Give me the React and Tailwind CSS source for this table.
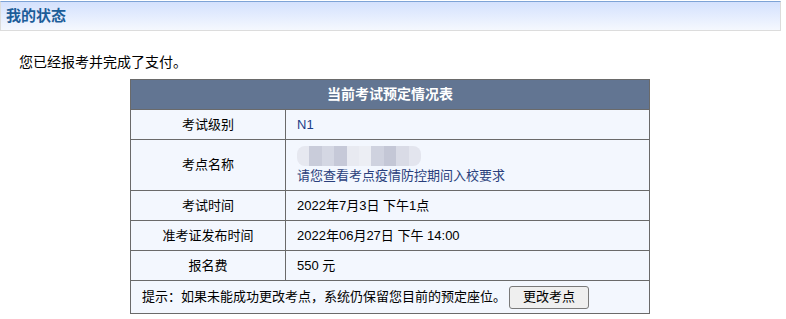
export default function App() {
    const font = { fontFamily: '"Liberation Sans", "Noto Sans CJK SC", sans-serif' };

    // 打码马赛克的色块
    const blocks = ['#e6e8f0', '#c9ccda', '#d4d7e3', '#c6c9d8', '#e8eaf1', '#eceef4', '#cfd2df', '#c4c7d6', '#d9dbe6', '#e3e5ee'];

    const rows = [
        { label: '考试级别', value: <span className="text-[#1b3c86]">N1</span> },
        {
            label: '考点名称',
            value: (
                <div className="flex flex-col">
                    <div className="flex h-[20px] w-[124px] overflow-hidden rounded-[8px] blur-[0.6px]">
                        {blocks.map((c, i) => (
                            <div key={i} className="h-full flex-1" style={{ backgroundColor: c }}></div>
                        ))}
                    </div>
                    <span className="mt-px leading-[18px] text-[#2a3f7c]">请您查看考点疫情防控期间入校要求</span>
                </div>
            ),
            tall: true,
        },
        { label: '考试时间', value: '2022年7月3日 下午1点' },
        { label: '准考证发布时间', value: '2022年06月27日 下午 14:00' },
        { label: '报名费', value: '550 元' },
    ];

    return (
        <div className="min-h-screen bg-white text-[14px] text-black" style={font}>
            {/* 标题栏 */}
            <div className="mt-px flex h-[30px] w-[781px] items-center border border-t-[#7ea3d6] border-x-[#dcdcdc] border-b-[#dcdcdc] bg-gradient-to-b from-[#d4e1fd] to-[#f5f8fe] pl-[5px]">
                <span className="text-[15px] font-bold text-[#1c5d99]">我的状态</span>
            </div>

            <p className="mt-[21px] pl-[19px] leading-[20px]">您已经报考并完成了支付。</p>

            <table className="mt-[7px] ml-[130px] w-[520px] border-collapse border border-[#6a6a6a] bg-[#f3f7fe] text-[13px]">
                <thead>
                    <tr>
                        <th colSpan={2} className="h-[30px] border border-[#6a6a6a] bg-[#627592] p-0 text-center text-[14px] font-bold text-white">
                            当前考试预定情况表
                        </th>
                    </tr>
                </thead>
                <tbody>
                    {rows.map((r) => (
                        <tr key={r.label}>
                            <td className={`${r.tall ? 'h-[51px]' : 'h-[30px]'} w-[155px] border border-[#6a6a6a] p-0 text-center`}>{r.label}</td>
                            <td className="border border-[#6a6a6a] p-0 pl-[11px]">{r.value}</td>
                        </tr>
                    ))}
                    <tr>
                        <td colSpan={2} className="h-[33px] border border-[#6a6a6a] p-0 pl-[11px]">
                            <div className="flex items-center gap-[3px]">
                                <span>提示：如果未能成功更改考点，系统仍保留您目前的预定座位。</span>
                                <button className="h-[23px] w-[80px] rounded-[3px] border border-[#7a7a7a] bg-[#efefef] text-[13px] text-black">
                                    更改考点
                                </button>
                            </div>
                        </td>
                    </tr>
                </tbody>
            </table>

            <p className="mt-[2px] pl-[19px] leading-[20px]">[下面]</p>
        </div>
    );
}
